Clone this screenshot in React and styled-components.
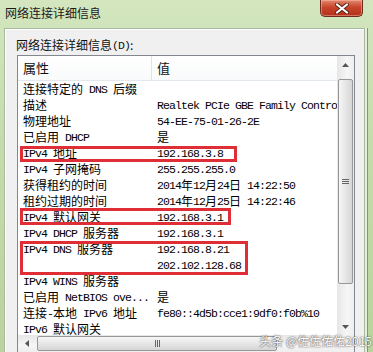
import React from 'react'
import styled, { createGlobalStyle } from 'styled-components'

const Global = createGlobalStyle`
  html, body { margin: 0; padding: 0; }
  body { width: 373px; height: 352px; overflow: hidden; background: #c9deb3; }
`

const CJK = `"Noto Sans CJK SC", "Noto Sans", sans-serif`

const Window = styled.div`
  position: relative;
  width: 373px;
  height: 352px;
  overflow: hidden;
  display: flex;
  flex-direction: column;
  padding: 0 8px 0 4px;
  box-sizing: border-box;
  background: linear-gradient(to bottom, #d3e6bf 0%, #c4dcab 40%, #b9d49d 100%);
  font-family: ${CJK};
`

const TitleBar = styled.div`
  height: 28px;
  flex: none;
  display: flex;
  justify-content: space-between;
  align-items: flex-start;
`

const Title = styled.div`
  font-size: 12px;
  line-height: 14px;
  margin: 6px 0 0 1px;
  color: #1a1a1a;
`

const CloseBtn = styled.div`
  width: 43px;
  height: 17px;
  margin-right: 2px;
  box-sizing: border-box;
  border: 1px solid #6e2a1c;
  border-top: none;
  border-radius: 0 0 5px 5px;
  background: linear-gradient(to bottom, #e08a72 0%, #c8452a 45%, #b1301a 100%);
  box-shadow: inset 0 0 0 1px rgba(255, 200, 180, 0.45);
  display: flex;
  align-items: center;
  justify-content: center;
`

const Panel = styled.div`
  flex: 1;
  background: #f0f0f0;
  border: 1px solid #a9b9a0;
  border-bottom: none;
  box-shadow: 2px 0 0 #e6efdc, 3px 0 0 #78a254, inset 1px 1px 0 #fff;
  padding: 9px 9px 0 12px;
  display: flex;
  flex-direction: column;
  min-height: 0;
`

const Label = styled.div`
  font-size: 12px;
  line-height: 14px;
  margin: 0 0 1px -1px;
  color: #111;
`

const ListBox = styled.div`
  flex: 1;
  min-height: 0;
  border: 1px solid #828790;
  border-bottom: none;
  background: #fff;
  display: grid;
  grid-template-columns: 1fr 17px;
  grid-template-rows: 1fr 17px;
`

const ListArea = styled.div`
  overflow: hidden;
  min-width: 0;
  min-height: 0;
`

const Header = styled.div`
  height: 24px;
  display: grid;
  grid-template-columns: 134px 1fr;
  border-bottom: 1px solid #e3e8ee;
  background: linear-gradient(to bottom, #ffffff, #f9fafb);
`

const HeadCell = styled.div`
  font-size: 13px;
  line-height: 24px;
  padding-left: 5px;
  color: #111;
  border-right: ${p => (p.$divider ? '1px solid #e0e3e8' : 'none')};
`

const Rows = styled.div`
  margin-top: 0;
`

const Row = styled.div`
  display: grid;
  grid-template-columns: 134px 1fr;
  height: 16px;
  line-height: 16px;
  white-space: nowrap;
`

const Cell = styled.div`
  padding-left: 5px;
  overflow: hidden;
  height: 16px;
  font-size: 12px;
  color: #000;
`

const Lat = styled.span`
  font-family: "Liberation Mono", monospace;
  font-size: 11.5px;
  letter-spacing: -0.9px;
  position: relative;
  top: -1px;
`

const VScroll = styled.div`
  grid-row: 1;
  grid-column: 2;
  background: linear-gradient(to right, #e6e6e6, #f6f6f6 60%, #eeeeee);
  display: flex;
  flex-direction: column;
  align-items: center;
`

const HScroll = styled.div`
  grid-row: 2;
  grid-column: 1;
  background: linear-gradient(to bottom, #e6e6e6, #f6f6f6 60%, #eeeeee);
  display: flex;
  align-items: center;
`

const Corner = styled.div`
  grid-row: 2;
  grid-column: 2;
  background: #f0f0f0;
`

const ArrowBox = styled.div`
  width: 17px;
  height: 17px;
  flex: none;
  display: flex;
  align-items: center;
  justify-content: center;
`

const Thumb = styled.div`
  box-sizing: border-box;
  border: 1px solid #979797;
  border-radius: 2px;
  display: flex;
  align-items: center;
  justify-content: center;
  ${p =>
    p.$vertical
      ? `width: 15px; height: 205px; margin-top: 6px;
         background: linear-gradient(to right, #f6f6f6, #e6e6e6 50%, #d6d6d6);`
      : `height: 15px; width: 240px; margin-left: 2px;
         background: linear-gradient(to bottom, #f6f6f6, #e6e6e6 50%, #d6d6d6);`}
`

const Spacer = styled.div`
  flex: 1;
`

const RedBox = styled.div`
  position: absolute;
  box-sizing: border-box;
  border: 3px solid #df2e35;
  pointer-events: none;
`

const Watermark = styled.div`
  position: absolute;
  right: 1px;
  bottom: 4px;
  font-size: 12px;
  line-height: 14px;
  color: #fff;
  text-shadow: 0 0 2px #555, 0 0 1px #333;
  opacity: 0.9;
`

// split text into latin / cjk runs so latin uses the narrow mono face
function T({ s }) {
  const parts = s.match(/[\x20-\x7e]+|[^\x20-\x7e]+/g) || []
  return parts.map((p, i) =>
    /^[\x20-\x7e]+$/.test(p) ? <Lat key={i}>{p}</Lat> : <span key={i}>{p}</span>
  )
}

const rows = [
  ['连接特定的 DNS 后缀', ''],
  ['描述', 'Realtek PCIe GBE Family Controller'],
  ['物理地址', '54-EE-75-01-26-2E'],
  ['已启用 DHCP', '是'],
  ['IPv4 地址', '192.168.3.8'],
  ['IPv4 子网掩码', '255.255.255.0'],
  ['获得租约的时间', '2014年12月24日 14:22:50'],
  ['租约过期的时间', '2014年12月25日 14:22:46'],
  ['IPv4 默认网关', '192.168.3.1'],
  ['IPv4 DHCP 服务器', '192.168.3.1'],
  ['IPv4 DNS 服务器', '192.168.8.21'],
  ['', '202.102.128.68'],
  ['IPv4 WINS 服务器', ''],
  ['已启用 NetBIOS ove...', '是'],
  ['连接-本地 IPv6 地址', 'fe80::4d5b:cce1:9df0:f0b%10'],
  ['IPv6 默认网关', ''],
]

const boxes = [
  { left: 20, top: 146, width: 217, height: 16 },
  { left: 20, top: 208, width: 211, height: 17 },
  { left: 20, top: 241, width: 228, height: 34 },
]

export default function App() {
  return (
    <>
      <Global />
      <Window>
        <TitleBar>
          <Title>网络连接详细信息</Title>
          <CloseBtn>
            <svg width="14" height="11" viewBox="0 0 14 11">
              <path d="M2 1.5 L12 9.5 M12 1.5 L2 9.5" stroke="#5a2418" strokeWidth="4" strokeLinecap="round" />
              <path d="M2 1.5 L12 9.5 M12 1.5 L2 9.5" stroke="#fff" strokeWidth="2.2" strokeLinecap="round" />
            </svg>
          </CloseBtn>
        </TitleBar>
        <Panel>
          <Label>
            网络连接详细信息<Lat>(D)</Lat>:
          </Label>
          <ListBox>
            <ListArea>
              <Header>
                <HeadCell $divider>属性</HeadCell>
                <HeadCell>值</HeadCell>
              </Header>
              <Rows>
                {rows.map((r, i) => (
                  <Row key={i}>
                    <Cell><T s={r[0]} /></Cell>
                    <Cell><T s={r[1]} /></Cell>
                  </Row>
                ))}
              </Rows>
            </ListArea>
            <VScroll>
              <ArrowBox>
                <svg width="7" height="4" viewBox="0 0 7 4"><path d="M0 4 L3.5 0 L7 4 Z" fill="#555" /></svg>
              </ArrowBox>
              <Thumb $vertical>
                <svg width="7" height="7" viewBox="0 0 7 7">
                  <path d="M0 1.5 H7 M0 3.5 H7 M0 5.5 H7" stroke="#666" strokeWidth="1" />
                </svg>
              </Thumb>
              <Spacer />
              <ArrowBox>
                <svg width="7" height="4" viewBox="0 0 7 4"><path d="M0 0 L3.5 4 L7 0 Z" fill="#555" /></svg>
              </ArrowBox>
            </VScroll>
            <HScroll>
              <ArrowBox>
                <svg width="4" height="7" viewBox="0 0 4 7"><path d="M4 0 L0 3.5 L4 7 Z" fill="#555" /></svg>
              </ArrowBox>
              <Thumb>
                <svg width="7" height="7" viewBox="0 0 7 7">
                  <path d="M1.5 0 V7 M3.5 0 V7 M5.5 0 V7" stroke="#666" strokeWidth="1" />
                </svg>
              </Thumb>
              <Spacer />
            </HScroll>
            <Corner />
          </ListBox>
        </Panel>
        {boxes.map((b, i) => (
          <RedBox key={i} style={b} />
        ))}
        <Watermark>头条 @佐佐佑佑2015</Watermark>
      </Window>
    </>
  )
}
